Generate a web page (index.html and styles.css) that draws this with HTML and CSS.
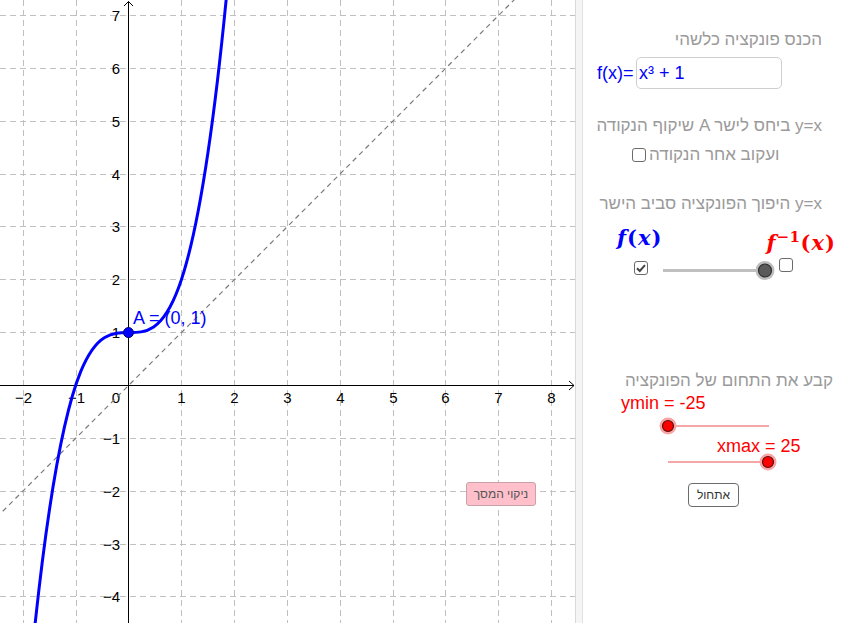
FILE: index.html
```html
<!DOCTYPE html>
<html lang="he">
<head>
<meta charset="utf-8">
<title>Graph</title>
<link rel="stylesheet" href="styles.css">
</head>
<body>
<div class="app">
  <div class="graphics">
    <svg class="plot" width="575" height="623" viewBox="0 0 575 623">
      <g class="grid">
        <line x1="23.5" y1="0" x2="23.5" y2="623"/>
        <line x1="76.5" y1="0" x2="76.5" y2="623"/>
        <line x1="181.5" y1="0" x2="181.5" y2="623"/>
        <line x1="234.5" y1="0" x2="234.5" y2="623"/>
        <line x1="287.5" y1="0" x2="287.5" y2="623"/>
        <line x1="340.5" y1="0" x2="340.5" y2="623"/>
        <line x1="393.5" y1="0" x2="393.5" y2="623"/>
        <line x1="445.5" y1="0" x2="445.5" y2="623"/>
        <line x1="498.5" y1="0" x2="498.5" y2="623"/>
        <line x1="551.5" y1="0" x2="551.5" y2="623"/>
        <line x1="0" y1="15.5" x2="575" y2="15.5"/>
        <line x1="0" y1="68.5" x2="575" y2="68.5"/>
        <line x1="0" y1="121.5" x2="575" y2="121.5"/>
        <line x1="0" y1="174.5" x2="575" y2="174.5"/>
        <line x1="0" y1="226.5" x2="575" y2="226.5"/>
        <line x1="0" y1="279.5" x2="575" y2="279.5"/>
        <line x1="0" y1="332.5" x2="575" y2="332.5"/>
        <line x1="0" y1="438.5" x2="575" y2="438.5"/>
        <line x1="0" y1="491.5" x2="575" y2="491.5"/>
        <line x1="0" y1="544.5" x2="575" y2="544.5"/>
        <line x1="0" y1="596.5" x2="575" y2="596.5"/>
      </g>
      <g class="axes">
        <line x1="0" y1="385.5" x2="574" y2="385.5"/>
        <polyline points="569,381 574,385.5 569,390"/>
        <line x1="128.5" y1="623" x2="128.5" y2="1.5"/>
        <polyline points="124,6 128.5,1.5 133,6"/>
      </g>
      <g class="ticks xt">
        <text x="23.5" y="403">−2</text>
        <text x="76.5" y="403">−1</text>
        <text x="181.5" y="403">1</text>
        <text x="234.5" y="403">2</text>
        <text x="287.5" y="403">3</text>
        <text x="340.5" y="403">4</text>
        <text x="393.5" y="403">5</text>
        <text x="445.5" y="403">6</text>
        <text x="498.5" y="403">7</text>
        <text x="551.5" y="403">8</text>
      </g>
      <g class="ticks yt">
        <text x="120" y="403">0</text>
        <text x="120" y="21">7</text>
        <text x="120" y="74">6</text>
        <text x="120" y="127">5</text>
        <text x="120" y="180">4</text>
        <text x="120" y="232">3</text>
        <text x="120" y="285">2</text>
        <text x="120" y="338">1</text>
        <text x="120" y="444">−1</text>
        <text x="120" y="497">−2</text>
        <text x="120" y="550">−3</text>
        <text x="120" y="602">−4</text>
      </g>
      <line class="identity" x1="-10" y1="524" x2="524" y2="-10"/>
      <path class="curve" d="M33.28 641.11 C98.52 6.95, 163.77 676.34, 229.01 -30.24"/>
      <circle class="point" cx="128.5" cy="332.6" r="5"/>
      <text class="point-label" x="133" y="323.5">A = (0, 1)</text>
    </svg>
    <button class="clear-btn" type="button">ניקוי המסך</button>
  </div>
  <div class="divider"></div>
  <div class="panel">
    <div class="title t1">הכנס פונקציה כלשהי</div>
    <div class="func-row">
      <span class="func-label">f(x)=</span>
      <div class="func-input">x³ + 1</div>
    </div>
    <div class="title t2">שיקוף הנקודה A ביחס לישר y=x</div>
    <div class="check-row">
      <span class="cb"></span>
      <span class="cb-text">ועקוב אחר הנקודה</span>
    </div>
    <div class="title t3">היפוך הפונקציה סביב הישר y=x</div>
    <div class="formula-row">
      <span class="fx">f<span class="par">(</span>x<span class="par">)</span></span>
      <span class="finv">f<sup>−1</sup><span class="par">(</span>x<span class="par">)</span></span>
    </div>
    <div class="toggle-row">
      <span class="cb cb-on"><svg width="14" height="14" viewBox="0 0 14 14"><path d="M3 7.2 L5.8 10 L11 4.2"/></svg></span>
      <svg class="gslider" width="126" height="28" viewBox="0 0 126 28">
        <line class="gtrack" x1="11" y1="14.5" x2="113" y2="14.5"/>
        <circle class="ghalo" cx="113" cy="14.5" r="9.5"/>
        <circle class="gknob" cx="113" cy="14.5" r="6.5"/>
      </svg>
      <span class="cb cb-off"></span>
    </div>
    <div class="title t4">קבע את התחום של הפונקציה</div>
    <div class="var ymin">ymin = -25</div>
    <svg class="rslider" width="122" height="18" viewBox="0 0 122 18">
      <line class="rtrack" x1="10" y1="9" x2="111" y2="9"/>
      <circle class="rhalo" cx="10" cy="9" r="8.5"/>
      <circle class="rknob" cx="10" cy="9" r="5.5"/>
    </svg>
    <div class="var xmax">xmax = 25</div>
    <svg class="rslider" width="122" height="18" viewBox="0 0 122 18">
      <line class="rtrack" x1="10" y1="9" x2="110" y2="9"/>
      <circle class="rhalo" cx="110" cy="9" r="8.5"/>
      <circle class="rknob" cx="110" cy="9" r="5.5"/>
    </svg>
    <button class="reset" type="button">אתחול</button>
  </div>
</div>
</body>
</html>
```

FILE: styles.css
```css
html, body {
  margin: 0;
  padding: 0;
  background: #ffffff;
}

body {
  font-family: "Liberation Sans", Arial, sans-serif;
}

.app {
  display: flex;
  width: 861px;
  height: 623px;
  overflow: hidden;
}

.graphics {
  position: relative;
  width: 575px;
  height: 623px;
  flex: none;
  overflow: hidden;
}

.plot {
  display: block;
}

.grid line {
  stroke: #c0c0c0;
  stroke-width: 1;
  stroke-dasharray: 6 4;
}

.axes line,
.axes polyline {
  stroke: #000000;
  stroke-width: 1;
  fill: none;
}

.ticks text {
  font-family: "Liberation Sans", Arial, sans-serif;
  font-size: 15px;
  fill: #000000;
}

.xt text {
  text-anchor: middle;
}

.yt text {
  text-anchor: end;
}

.identity {
  stroke: #7a7a7a;
  stroke-width: 1.2;
  stroke-dasharray: 5 4;
}

.curve {
  fill: none;
  stroke: #0000ff;
  stroke-width: 3;
}

.point {
  fill: #0000ff;
  stroke: #00007a;
  stroke-width: 1;
}

.point-label {
  font-family: "Liberation Sans", Arial, sans-serif;
  font-size: 18px;
  fill: #0000ff;
}

.clear-btn {
  position: absolute;
  left: 466px;
  top: 482px;
  width: 70px;
  height: 24px;
  padding: 0;
  margin: 0;
  background: #ffc0cb;
  border: 1px solid #c9a1a8;
  border-radius: 3px;
  font-family: "Liberation Sans", Arial, sans-serif;
  font-size: 12px;
  color: #555555;
}

.divider {
  width: 6px;
  flex: none;
  background: #f5f5f5;
  border-left: 1px solid #d9d9d9;
  border-right: 1px solid #e2e2e2;
}

.panel {
  flex: 1;
  display: flex;
  flex-direction: column;
  padding-top: 30px;
  min-width: 0;
}

.title {
  height: 20px;
  line-height: 20px;
  font-size: 17px;
  color: #9a9a9a;
  text-align: right;
  white-space: nowrap;
  padding-right: 39px;
}

.t4 {
  padding-right: 28px;
}

.func-row {
  margin-top: 7px;
  height: 32px;
  display: flex;
  align-items: center;
  padding-left: 14px;
}

.func-label {
  font-size: 18px;
  color: #0000ff;
  width: 39px;
}

.func-input {
  box-sizing: border-box;
  width: 146px;
  height: 32px;
  border: 1px solid #cfcfcf;
  border-radius: 5px;
  font-size: 18px;
  line-height: 30px;
  color: #0000ff;
  padding-left: 2px;
}

.t2 {
  margin-top: 27px;
}

.check-row {
  margin-top: 10px;
  height: 18px;
  display: flex;
  align-items: center;
  margin-left: 49px;
  gap: 3px;
}

.cb {
  box-sizing: border-box;
  display: block;
  width: 14px;
  height: 14px;
  border: 1.5px solid #6b6b6b;
  border-radius: 3px;
  background: #ffffff;
  flex: none;
}

.cb svg {
  display: block;
  margin: -1.5px 0 0 -1.5px;
}

.cb svg path {
  fill: none;
  stroke: #444444;
  stroke-width: 2;
}

.cb-text {
  font-size: 17px;
  color: #9a9a9a;
  white-space: nowrap;
}

.t3 {
  margin-top: 30px;
}

.formula-row {
  margin-top: 10px;
  height: 30px;
  display: flex;
}

.fx,
.finv {
  font-family: "DejaVu Serif", "Liberation Serif", serif;
  font-weight: bold;
  font-style: italic;
  font-size: 21px;
  letter-spacing: 1px;
  white-space: nowrap;
  line-height: 24px;
}

.par {
  font-style: normal;
}

.fx {
  color: #0000ff;
  margin-left: 34px;
  margin-top: 2px;
}

.finv {
  color: #ff0000;
  margin-left: 104px;
  margin-top: 7px;
}

.finv sup {
  font-size: 15px;
  font-style: normal;
  vertical-align: 8px;
  line-height: 0;
  letter-spacing: 0.5px;
}

.toggle-row {
  margin-top: 2px;
  height: 28px;
  display: flex;
  align-items: flex-start;
}

.cb-on {
  margin-left: 51px;
  margin-top: 5px;
}

.gslider {
  display: block;
  margin-left: 4px;
  overflow: visible;
}

.gtrack {
  stroke: #c0c0c0;
  stroke-width: 3;
}

.ghalo {
  fill: #bdbdbd;
}

.gknob {
  fill: #5a5a5a;
  stroke: #2f2f2f;
  stroke-width: 1.2;
}

.cb-off {
  margin-left: 1px;
  margin-top: 2px;
}

.t4 {
  margin-top: 87px;
}

.var {
  font-size: 18px;
  color: #ff0000;
  white-space: nowrap;
}

.ymin {
  margin-top: 2px;
  height: 20px;
  line-height: 20px;
  margin-left: 38px;
}

.rslider {
  display: block;
  margin-left: 75px;
  overflow: visible;
  flex: none;
}

.ymin + .rslider {
  margin-top: 4px;
}

.rtrack {
  stroke: #f08a8a;
  stroke-width: 1.5;
}

.rhalo {
  fill: #f7a5a5;
}

.rknob {
  fill: #ff0000;
  stroke: #5a1010;
  stroke-width: 1.2;
}

.xmax {
  margin-top: 4px;
  height: 14px;
  line-height: 14px;
  margin-left: 134px;
}

.reset {
  align-self: flex-start;
  margin-top: 12px;
  margin-left: 105px;
  width: 51px;
  height: 24px;
  padding: 0;
  background: #ffffff;
  border: 1.5px solid #6b6b6b;
  border-radius: 4px;
  font-family: "Liberation Sans", Arial, sans-serif;
  font-size: 12px;
  color: #333333;
}
```
